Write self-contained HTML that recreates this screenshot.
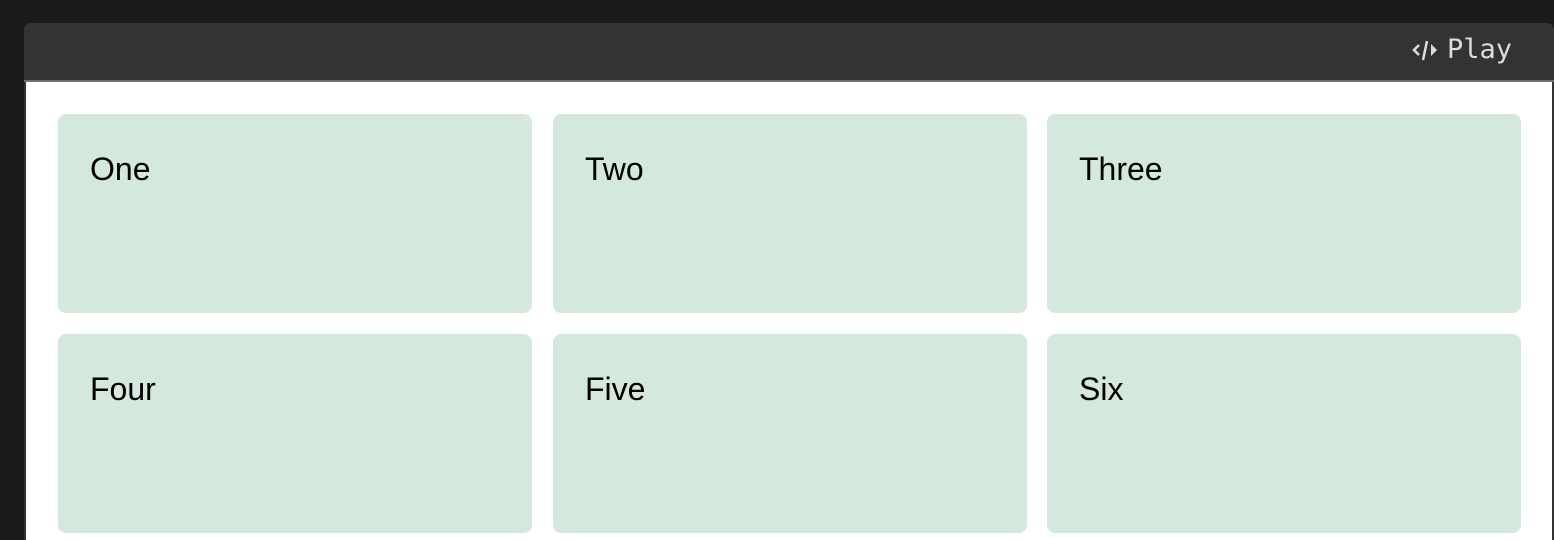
<!DOCTYPE html>
<html style="overflow:hidden;height:540px"><head><style>
body{margin:0;width:1554px;height:540px;background:#1b1b1b;overflow:hidden;font-family:"Liberation Sans",Arial,sans-serif;position:relative}
.frame{position:absolute;left:24px;top:23px;width:1530px;height:517px;background:#333;border-radius:7px 7px 0 0;overflow:hidden}
.hdr{height:57px;position:relative;border-bottom:2px solid #6f6f6f}
.play{position:absolute;right:42px;top:11px;color:#ddd;font-family:"DejaVu Sans Mono","Liberation Mono",monospace;font-size:27px;display:flex;align-items:center;gap:5px}
.body{position:absolute;left:2px;top:59px;right:2px;bottom:0;background:#fff}
.card{position:absolute;width:474px;height:199px;background:#d4e8dd;border-radius:8px;box-sizing:border-box;padding:37px 0 0 32px;font-size:32px;color:#000}
</style></head><body>
<div class="frame">
<div class="hdr"><div class="play"><svg width="32" height="26" viewBox="0 0 32 26"><path d="M9 8 L4 13 L9 18" fill="none" stroke="#ddd" stroke-width="2.5"/><path d="M17 4 L13 23" stroke="#ddd" stroke-width="2.5"/><path d="M21 7 L27 13 L21 19Z" fill="#ddd"/></svg><span>Play</span></div></div>
<div class="body">
<div class="card" style="left:32px;top:32px">One</div>
<div class="card" style="left:527px;top:32px">Two</div>
<div class="card" style="left:1021px;top:32px">Three</div>
<div class="card" style="left:32px;top:252px">Four</div>
<div class="card" style="left:527px;top:252px">Five</div>
<div class="card" style="left:1021px;top:252px">Six</div>
</div></div>
</body></html>
